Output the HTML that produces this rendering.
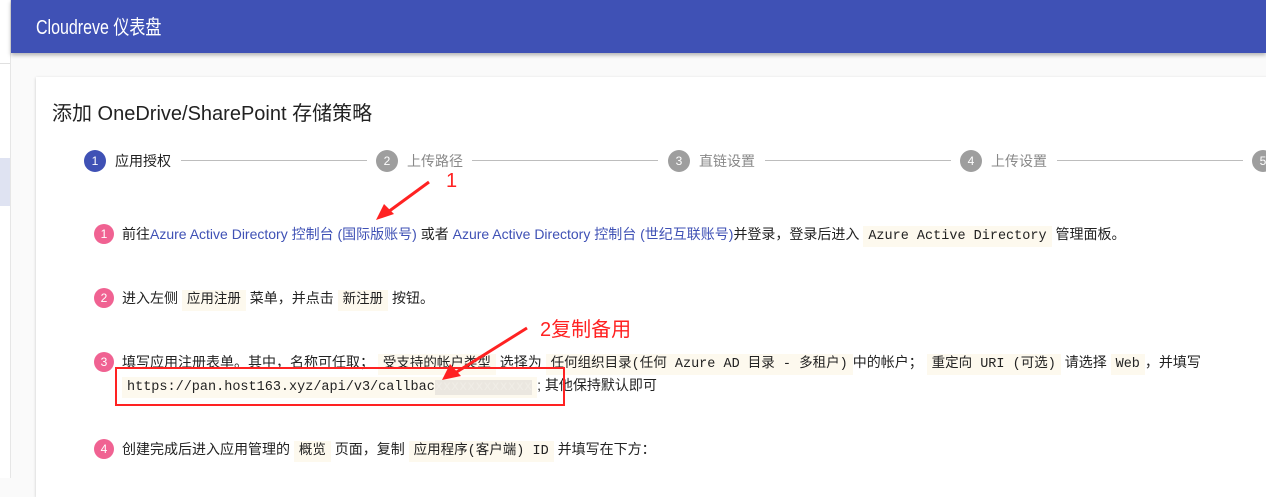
<!DOCTYPE html>
<html><head><meta charset="utf-8"><style>
*{margin:0;padding:0;box-sizing:border-box}
body{width:1266px;height:478px;overflow:hidden;background:#fafafa;font-family:"Liberation Sans","Noto Sans CJK SC",sans-serif;position:relative;color:#222}
.side{position:absolute;left:0;top:0;width:11px;height:478px;background:#fff;border-right:1px solid #e6e6e6}
.sel{position:absolute;left:0;top:158px;width:10px;height:48px;background:#dfe3f2}
.sline{position:absolute;left:0;top:63px;width:10px;height:1px;background:#e0e0e0}
.hdr{position:absolute;left:11px;top:0;width:1255px;height:53px;background:#3f51b5;box-shadow:0 2px 4px rgba(0,0,0,.3);color:#fff;font-size:20px;padding:11px 0 0 25px}
.hdr span{display:inline-block;transform:scaleX(.8);transform-origin:left}
.card{position:absolute;left:36px;top:77px;width:1240px;height:420px;background:#fff;box-shadow:0 1px 3px rgba(0,0,0,.2)}
.t{position:absolute;left:52px;top:97px;font-size:20px;color:#222}
.st{position:absolute;top:150px;height:22px;font-size:14px;line-height:22px}
.c{display:inline-block;width:22px;height:22px;border-radius:50%;color:#fff;text-align:center;font-size:12px;line-height:22px;background:#9e9e9e;vertical-align:top;margin-right:9px}
.ln{position:absolute;top:160px;height:1px;background:#bdbdbd}
.it{position:absolute;left:94px;font-size:14px;line-height:22px;white-space:nowrap}
.p{display:inline-block;width:20px;height:20px;border-radius:50%;background:#f06292;color:#fff;font-size:12px;text-align:center;line-height:20px;margin-right:8px;vertical-align:top;margin-top:1px}
a{color:#3f51b5;text-decoration:none}
code{font-family:"Liberation Mono","Noto Sans CJK SC",monospace;background:#fdf9ee;padding:3px 5px;font-size:13.5px}
.red{color:#f22;font-size:20px;position:absolute}
</style></head><body>
<div class="side"></div><div class="sline"></div><div class="sel"></div>
<div class="hdr"><span>Cloudreve 仪表盘</span></div>
<div class="card"></div>
<div class="t">添加 OneDrive/SharePoint 存储策略</div>
<div class="st" style="left:84px"><span class="c" style="background:#3f51b5">1</span>应用授权</div>
<div class="ln" style="left:181px;width:186px"></div>
<div class="st" style="left:376px;color:#888"><span class="c">2</span>上传路径</div>
<div class="ln" style="left:472px;width:186px"></div>
<div class="st" style="left:668px;color:#888"><span class="c">3</span>直链设置</div>
<div class="ln" style="left:765px;width:186px"></div>
<div class="st" style="left:960px;color:#888"><span class="c">4</span>上传设置</div>
<div class="ln" style="left:1057px;width:186px"></div>
<div class="st" style="left:1252px;color:#888"><span class="c">5</span></div>
<div class="it" style="top:223px"><span class="p">1</span>前往<a>Azure Active Directory 控制台 (国际版账号)</a> 或者 <a>Azure Active Directory 控制台 (世纪互联账号)</a>并登录，登录后进入 <code>Azure Active Directory</code> 管理面板。</div>
<div class="it" style="top:287px"><span class="p">2</span>进入左侧 <code>应用注册</code> 菜单，并点击 <code>新注册</code> 按钮。</div>
<div class="it" style="top:351px"><span class="p">3</span>填写应用注册表单。其中，名称可任取； <code>受支持的帐户类型</code> 选择为 <code>任何组织目录(任何 Azure AD 目录 - 多租户)</code>中的帐户； <code>重定向 URI (可选)</code> 请选择 <code>Web</code>，并填写</div>
<div class="it" style="top:374px;left:122px"><code>https://pan.host163.xyz/api/v3/callbac<span style="color:#f0ede6;background:#ebe7e0">xxxxxxxxxxxx</span></code>; 其他保持默认即可</div>
<div style="position:absolute;left:115px;top:367px;width:450px;height:39px;border:2px solid #f22"></div>
<div class="it" style="top:438px"><span class="p">4</span>创建完成后进入应用管理的 <code>概览</code> 页面，复制 <code>应用程序(客户端) ID</code> 并填写在下方：</div>
<div class="red" style="left:446px;top:170px">1</div>
<div class="red" style="left:540px;top:313px">2复制备用</div>
<svg style="position:absolute;left:0;top:0" width="1266" height="478">
<line x1="429" y1="182" x2="388" y2="212" stroke="#f22" stroke-width="3"/>
<polygon points="376,220 384,204 394,214" fill="#f22"/>
<line x1="527" y1="328" x2="455" y2="373" stroke="#f22" stroke-width="3"/>
<polygon points="442,380 450,364 461,376" fill="#f22"/>
</svg>
</body></html>
